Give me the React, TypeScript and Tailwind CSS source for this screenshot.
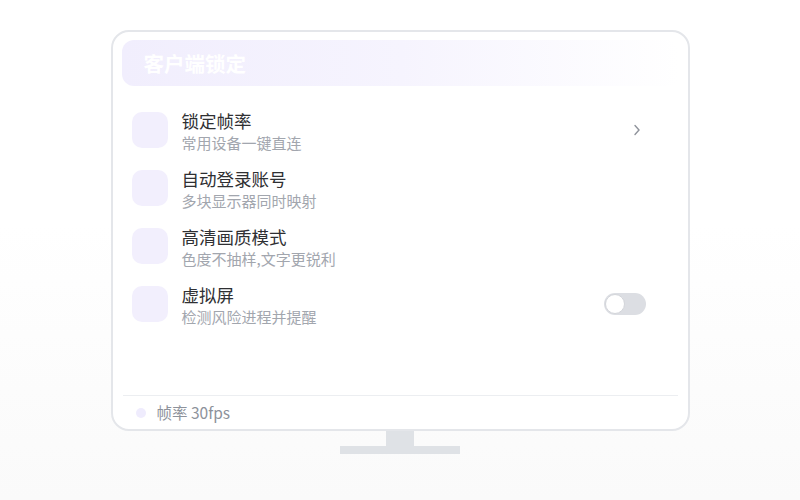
import React, { useState } from "react";

const rows = [
  { title: "锁定帧率", desc: "常用设备一键直连", right: "chevron" },
  { title: "自动登录账号", desc: "多块显示器同时映射", right: "" },
  { title: "高清画质模式", desc: "色度不抽样,文字更锐利", right: "" },
  { title: "虚拟屏", desc: "检测风险进程并提醒", right: "toggle" },
];

export default function App() {
  const [on, setOn] = useState(false);

  return (
    <div
      className="h-[500px] w-full bg-gradient-to-b from-white from-45% to-[#fafafa]"
      style={{ fontFamily: '"Noto Sans CJK SC", "Noto Sans", sans-serif' }}
    >
      <div className="flex flex-col items-center pt-[30px]">
        {/* screen */}
        <div className="flex h-[401px] w-[579px] flex-col rounded-[18px] border-2 border-[#e4e6ea] bg-white">
          <div className="px-[9px] pt-[8px]">
            <div className="flex h-[46px] items-center rounded-xl bg-gradient-to-r from-[#f1eefd] via-[#f6f4fe] to-white pl-[22px]">
              <span className="text-[20.5px] font-bold text-white">客户端锁定</span>
            </div>
          </div>

          <div className="mt-[15px] flex flex-col pl-[19px] pr-[42px]">
            {rows.map((row) => (
              <div key={row.title} className="flex h-[58px] items-center">
                <div className="h-[36px] w-[36px] rounded-[10px] bg-[#f2effd]" />
                <div className="ml-[14px] mt-[4px] flex flex-1 flex-col">
                  <span className="text-[17.5px] leading-[22px] text-[#2f3033]">{row.title}</span>
                  <span className="text-[15px] leading-[22px] text-[#a2a6ae]">{row.desc}</span>
                </div>
                {row.right === "chevron" && (
                  <svg width="8" height="12" viewBox="0 0 8 12" className="mr-[5px]">
                    <path d="M2 1.5 L6 6 L2 10.5" fill="none" stroke="#8f939b" strokeWidth="1.4" strokeLinecap="round" />
                  </svg>
                )}
                {row.right === "toggle" && (
                  <button
                    onClick={() => setOn(!on)}
                    className={`relative h-[22px] w-[42px] rounded-full ${on ? "bg-[#8b7cf6]" : "bg-[#dcdee3]"}`}
                  >
                    <span
                      className={`absolute top-[1px] h-[20px] w-[20px] rounded-full border border-[#d3d5da] bg-white ${on ? "left-[21px]" : "left-[1px]"}`}
                    />
                  </button>
                )}
              </div>
            ))}
          </div>

          <div className="mt-auto mx-[10px] flex h-[34px] items-center border-t border-[#eceef1] pl-[13px]">
            <span className="h-[10px] w-[10px] rounded-full bg-[#efecfd]" />
            <span className="ml-[11px] text-[15.5px] text-[#8d929b]">帧率 30fps</span>
          </div>
        </div>

        {/* stand */}
        <div className="h-[15px] w-[28px] bg-[#dfe2e6]" />
        <div className="h-[8px] w-[120px] bg-[#dfe2e6]" />
      </div>
    </div>
  );
}
